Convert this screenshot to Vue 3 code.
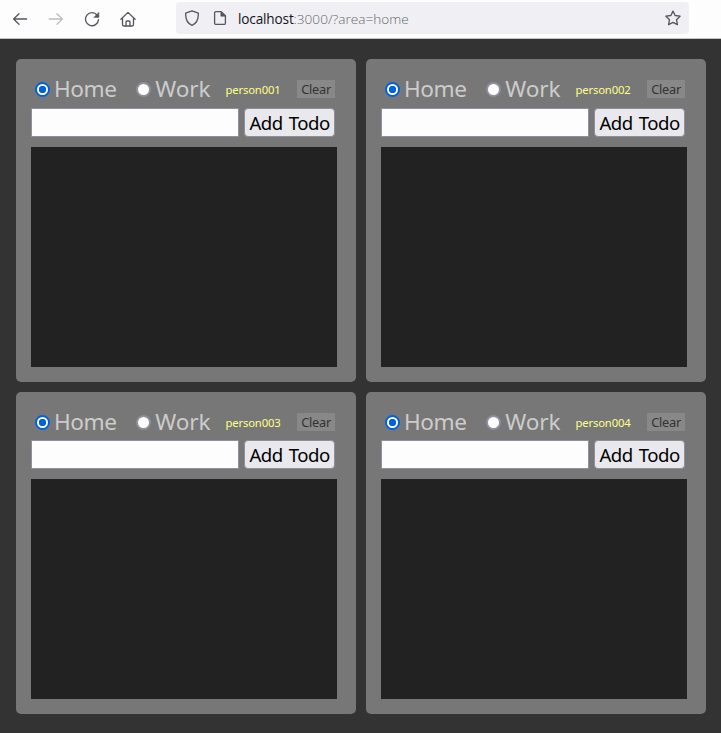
<script setup>
import { reactive } from 'vue'

const people = reactive(
  ['person001', 'person002', 'person003', 'person004'].map((name) => ({ name, area: 'home', text: '' }))
)
</script>

<template>
  <div class="window">
    <header class="toolbar">
      <nav class="nav">
        <svg class="icon" viewBox="0 0 16 16"><path d="M14.6 8H1.6M7 2.7 1.6 8 7 13.3" /></svg>
        <svg class="icon faded" viewBox="0 0 16 16"><path d="M1.2 8h13.2M9 2.7 14.4 8 9 13.3" /></svg>
        <svg class="icon" viewBox="0 0 16 16">
          <path d="M13.2 4.3A6.5 6.5 0 1 0 14.5 8.6" />
          <path class="solid" d="M14.9 1.5v4.9H10z" />
        </svg>
        <svg class="icon home-icon" viewBox="0 0 16 16">
          <path d="M.9 8.3 8 1.4l7.1 6.9M2.5 7v6.6q0 1.4 1.4 1.4h8.2q1.4 0 1.4-1.4V7" />
          <path d="M6 15v-4q0-1 1-1h2q1 0 1 1v4" />
        </svg>
      </nav>
      <div class="address">
        <svg class="icon" viewBox="0 0 16 16">
          <path d="M8 .9 14.3 3.2C14.6 9 12.7 13.3 8 15.4 3.3 13.3 1.4 9 1.7 3.2Z" />
        </svg>
        <svg class="icon page" viewBox="0 0 16 16">
          <path d="M3.6 1.6h5.6l4.2 4.2v7.4q0 1.2-1.2 1.2H3.8q-1.2 0-1.2-1.2V2.8q0-1.2 1.2-1.2Z" />
          <path class="solid" d="M8.8 1.6v4.7h4.7z" />
        </svg>
        <span class="url"><b>localhost</b>:3000/?area=home</span>
        <svg class="icon star" viewBox="0 0 16 16">
          <path d="M8 1.1 10.1 5.5 15.1 6.2 11.5 9.7 12.4 14.7 8 12.4 3.6 14.7 4.5 9.7.9 6.2 5.9 5.5Z" />
        </svg>
      </div>
    </header>

    <main class="board">
      <section v-for="person in people" :key="person.name" class="card">
        <div class="options">
          <label class="choice home">
            <input v-model="person.area" type="radio" :name="person.name" value="home" />
            <span>Home</span>
          </label>
          <label class="choice work">
            <input v-model="person.area" type="radio" :name="person.name" value="work" />
            <span>Work</span>
          </label>
          <span class="person">{{ person.name }}</span>
          <button class="clear">Clear</button>
        </div>
        <form class="entry" @submit.prevent>
          <input v-model="person.text" class="field" type="text" />
          <button class="add">Add Todo</button>
        </form>
        <div class="list"></div>
      </section>
    </main>
  </div>
</template>

<style>
body {
  background: #333;
}
</style>

<style scoped>
.window {
  height: 733px;
  overflow: hidden;
  background: #333;
  font-family: "Noto Sans", "Open Sans", sans-serif;
}
.window * {
  box-sizing: border-box;
}
.toolbar {
  display: flex;
  height: 39px;
  padding: 2px 32px 0 12px;
  background: #fdfdfe;
  border-bottom: 1px solid #c3c6c6;
}
.nav {
  display: flex;
  align-items: center;
  gap: 20px;
  height: 33px;
  width: 164px;
}
.icon {
  flex: none;
  width: 16px;
  height: 16px;
  fill: none;
  stroke: #55555f;
  stroke-width: 1.3;
  stroke-linecap: round;
  stroke-linejoin: round;
}
.icon .solid {
  fill: #55555f;
  stroke-width: 0.5;
}
.faded {
  stroke: #bdbdc2;
}
.home-icon {
  margin-left: -0.5px;
}
.address {
  display: flex;
  align-items: center;
  width: 513px;
  height: 32px;
  padding: 0 8px;
  border-radius: 4px;
  background: #f0eff4;
}
.page {
  margin-left: 12px;
}
.url {
  flex: 1;
  margin-left: 10px;
  padding-top: 2px;
  color: #66666c;
  font-family: "Open Sans", sans-serif;
  font-size: 13.6px;
  font-weight: 300;
  line-height: 18px;
  white-space: nowrap;
}
.url b {
  color: #15141a;
  font-weight: 400;
  letter-spacing: -0.15px;
}
.board {
  display: grid;
  grid-template-columns: 340px 340px;
  grid-template-rows: 323px 322px;
  gap: 10px;
  padding: 20px 15px 19px 16px;
}
.card {
  display: flex;
  flex-direction: column;
  padding: 15px 19px 15px 15px;
  border-radius: 5px;
  background: #777;
}
.options {
  display: flex;
  flex: 1;
  align-items: flex-start;
  padding: 0 2px 0 4px;
}
.choice {
  display: flex;
  gap: 4px;
  padding-top: 8px;
  height: 30px;
  color: #ccc;
  font-size: 22.6px;
  letter-spacing: -0.45px;
  line-height: 30px;
}
.choice span {
  margin-top: -8px;
}
.choice input {
  appearance: none;
  flex: none;
  width: 15px;
  height: 15px;
  margin: 0;
  border: 2px solid #8f8f9d;
  border-radius: 50%;
  background: #fff;
}
.choice input:checked {
  border-color: #0061e0;
  background: radial-gradient(circle, #0061e0 3.4px, #fff 4px);
}
.home {
  width: 101px;
}
.work {
  gap: 4.5px;
  width: 90px;
  letter-spacing: -0.1px;
}
.person {
  width: 72px;
  margin-top: 8px;
  color: #ff8;
  font-size: 11.3px;
  letter-spacing: -0.15px;
  line-height: 16px;
}
.clear {
  width: 38px;
  height: 18px;
  margin-top: 6px;
  padding: 1px 0 0;
  border: 0;
  background: #888;
  color: #333;
  font: 12.8px/17px "Noto Sans", sans-serif;
  letter-spacing: -0.25px;
}
.entry {
  display: flex;
  gap: 5px;
  height: 29px;
  margin-bottom: 10px;
}
.field {
  width: 208px;
  height: 29px;
  padding: 0 4px;
  border: 1px solid #8f8f9d;
  border-radius: 1px;
  background: #fdfdfe;
  font-size: 18px;
}
.add {
  width: 91px;
  height: 29px;
  padding: 1px 0 0;
  border: 1px solid #8f8f9d;
  border-radius: 4px;
  background: #e9e9ed;
  color: #000;
  font: 18.6px/26px "Noto Sans", sans-serif;
  letter-spacing: -0.55px;
  word-spacing: 2px;
  white-space: nowrap;
}
.list {
  flex: none;
  height: 220px;
  background: #222;
}
</style>
